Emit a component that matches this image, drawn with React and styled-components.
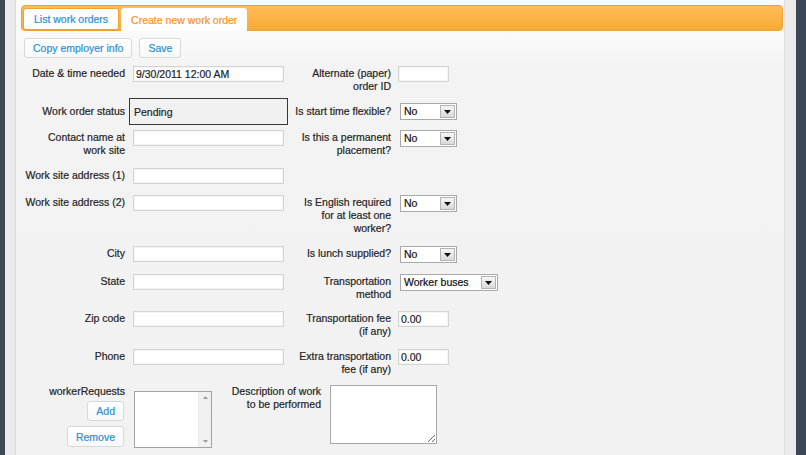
import React from 'react';
import styled, { createGlobalStyle } from 'styled-components';

const GlobalStyle = createGlobalStyle`
  html, body { margin: 0; padding: 0; height: 100%; }
  body {
    background: #3c4756;
    font-family: "Liberation Sans", Arial, sans-serif;
    font-size: 10.5px;
    color: #252525;
    overflow: hidden;
    -webkit-text-stroke: 0.2px currentColor;
  }
  #root { height: 100%; }
`;

const Shell = styled.div`
  height: 455px;
  margin: 0 10px 0 5px;
  padding: 0 11px 0 10px;
  box-sizing: border-box;
  background: #ebebeb;
`;

const Panel = styled.div`
  height: 100%;
  box-sizing: border-box;
  border-left: 1px solid #d9d9d9;
  border-right: 1px solid #e0e0e0;
  background: linear-gradient(#fbfbfb 0, #fafafa 36px, #f3f3f3 70px, #f2f2f2 100%);
  padding: 5px 1px 0 5px;
`;

const TabBar = styled.div`
  height: 26px;
  box-sizing: border-box;
  border: 1px solid #eca136;
  border-radius: 4px;
  background: linear-gradient(#ffbd55 0%, #fcb447 45%, #f9aa36 100%);
  display: flex;
  align-items: flex-end;
  gap: 2px;
  padding-left: 1px;
`;

const Tab = styled.div`
  box-sizing: border-box;
  height: ${p => (p.$active ? '23px' : '22px')};
  margin-bottom: ${p => (p.$active ? '-1px' : '0')};
  padding: 0 ${p => (p.$active ? 9 : 10)}px;
  display: flex;
  align-items: center;
  background: #fff;
  border: ${p => (p.$active ? '1px solid #fff' : '1px solid #f0a232')};
  border-radius: ${p => (p.$active ? '3px 3px 0 0' : '3px')};
  color: ${p => (p.$active ? '#f7911f' : '#2a8fd2')};
  font-size: 10.5px;
  white-space: nowrap;
`;

const Toolbar = styled.div`
  display: flex;
  gap: 7px;
  margin: 7px 0 0 3px;
`;

const Button = styled.div`
  box-sizing: border-box;
  height: ${p => p.$h || 20}px;
  padding: 0 ${p => p.$px ?? 8}px;
  display: inline-flex;
  align-items: center;
  justify-content: center;
  background: linear-gradient(#ffffff, #f8f8f8);
  border: 1px solid #d9d9d9;
  border-radius: 3px;
  color: #2a90d3;
  font-size: 10.5px;
  white-space: nowrap;
`;

const Form = styled.div`
  margin-top: 8px;
`;

const Row = styled.div`
  display: grid;
  grid-template-columns: 108px 163px 106px 1fr;
  align-items: ${p => (p.$center ? 'center' : 'start')};
  margin-bottom: ${p => p.$mb ?? 11}px;
`;

const Label = styled.div`
  text-align: right;
  padding-right: ${p => (p.$right ? 7 : 4)}px;
  padding-top: ${p => (p.$center ? 0 : 1)}px;
  line-height: 13px;
  white-space: nowrap;
`;

const Cell = styled.div`
  display: flex;
  align-items: flex-start;
`;

const TextInput = styled.input`
  box-sizing: border-box;
  width: ${p => (p.$small ? 51 : 151)}px;
  height: 16px;
  margin: 0 0 0 ${p => (p.$small ? 0 : 4)}px;
  padding: 0 2px;
  border: 1px solid #d5d5d5;
  box-shadow: inset 0 0 0 1px #f4f4f4;
  background: #fff;
  font-family: inherit;
  font-size: 10.5px;
  color: #1e1e1e;
  -webkit-text-stroke: 0.2px currentColor;
  outline: none;
`;

const StatusBox = styled.div`
  box-sizing: border-box;
  width: 159px;
  height: 27px;
  border: 1px solid #383838;
  background: #f1f1f1;
  padding-left: 4px;
  display: flex;
  align-items: center;
`;

const SelectBox = styled.div`
  box-sizing: border-box;
  width: ${p => p.$w || 57}px;
  height: 17px;
  margin-left: 2px;
  border: 1px solid #a9a9a9;
  background: #fff;
  display: flex;
  align-items: center;
  color: #111;
`;

const SelectText = styled.span`
  flex: 1;
  padding-left: 3px;
  line-height: 15px;
`;

const SelectButton = styled.span`
  box-sizing: border-box;
  width: 15px;
  height: 13px;
  margin-right: 1px;
  border: 1px solid #b3b3b3;
  background: linear-gradient(#f6f6f6, #d9d9d9);
  display: flex;
  align-items: center;
  justify-content: center;
`;

const LastRow = styled.div`
  display: flex;
  align-items: flex-start;
`;

const WorkerCol = styled.div`
  width: 104px;
  display: flex;
  flex-direction: column;
  align-items: flex-end;
`;

const WorkerLabel = styled.div`
  line-height: 13px;
`;

const WorkerButtons = styled.div`
  display: flex;
  flex-direction: column;
  align-items: flex-end;
  gap: 5px;
  margin-top: 3px;
  margin-right: 1px;
`;

const ListBox = styled.div`
  box-sizing: border-box;
  width: 78px;
  height: 57px;
  margin: 6px 0 0 9px;
  border: 1px solid #a3a3a3;
  background: #fff;
  display: flex;
  justify-content: flex-end;
`;

const ScrollBar = styled.div`
  width: 12px;
  background: #f1f1f1;
  border-left: 1px solid #e9e9e9;
  display: flex;
  flex-direction: column;
  justify-content: space-between;
  align-items: center;
  padding: 4px 0;
`;

const DescLabel = styled.div`
  width: 99px;
  margin-left: 10px;
  text-align: right;
  line-height: 13px;
  white-space: nowrap;
`;

const TextArea = styled.textarea`
  box-sizing: border-box;
  width: 107px;
  height: 59px;
  margin: 0 0 0 9px;
  border: 1px solid #a8a8a8;
  background: #fff;
  font-family: inherit;
  font-size: 10.5px;
  outline: none;
`;

const Arrow = ({ up, color = '#111', w = 7, h = 4 }) => (
  <svg width={w} height={h} viewBox="0 0 7 4">
    <polygon points={up ? '0,4 7,4 3.5,0' : '0,0 7,0 3.5,4'} fill={color} />
  </svg>
);

const Select = ({ value, w }) => (
  <SelectBox $w={w}>
    <SelectText>{value}</SelectText>
    <SelectButton>
      <Arrow />
    </SelectButton>
  </SelectBox>
);

export default function App() {
  return (
    <>
      <GlobalStyle />
      <Shell>
        <Panel>
          <TabBar>
            <Tab>List work orders</Tab>
            <Tab $active>Create new work order</Tab>
          </TabBar>
          <Toolbar>
            <Button>Copy employer info</Button>
            <Button>Save</Button>
          </Toolbar>
          <Form>
            <Row $mb={5}>
              <Label>Date &amp; time needed</Label>
              <Cell><TextInput defaultValue="9/30/2011 12:00 AM" /></Cell>
              <Label $right>Alternate (paper)<br />order ID</Label>
              <Cell><TextInput $small defaultValue="" /></Cell>
            </Row>
            <Row $mb={5} $center>
              <Label $center>Work order status</Label>
              <Cell><StatusBox>Pending</StatusBox></Cell>
              <Label $right $center>Is start time flexible?</Label>
              <Cell><Select value="No" /></Cell>
            </Row>
            <Row>
              <Label>Contact name at<br />work site</Label>
              <Cell><TextInput /></Cell>
              <Label $right>Is this a permanent<br />placement?</Label>
              <Cell><Select value="No" /></Cell>
            </Row>
            <Row>
              <Label>Work site address (1)</Label>
              <Cell><TextInput /></Cell>
              <div />
              <div />
            </Row>
            <Row>
              <Label>Work site address (2)</Label>
              <Cell><TextInput /></Cell>
              <Label $right>Is English required<br />for at least one<br />worker?</Label>
              <Cell><Select value="No" /></Cell>
            </Row>
            <Row>
              <Label>City</Label>
              <Cell><TextInput /></Cell>
              <Label $right>Is lunch supplied?</Label>
              <Cell><Select value="No" /></Cell>
            </Row>
            <Row $mb={10}>
              <Label>State</Label>
              <Cell><TextInput /></Cell>
              <Label $right>Transportation<br />method</Label>
              <Cell><Select value="Worker buses" w={98} /></Cell>
            </Row>
            <Row>
              <Label>Zip code</Label>
              <Cell><TextInput /></Cell>
              <Label $right>Transportation fee<br />(if any)</Label>
              <Cell><TextInput $small defaultValue="0.00" /></Cell>
            </Row>
            <Row $mb={9}>
              <Label>Phone</Label>
              <Cell><TextInput /></Cell>
              <Label $right>Extra transportation<br />fee (if any)</Label>
              <Cell><TextInput $small defaultValue="0.00" /></Cell>
            </Row>
            <LastRow>
              <WorkerCol>
                <WorkerLabel>workerRequests</WorkerLabel>
                <WorkerButtons>
                  <Button $px={8}>Add</Button>
                  <Button $px={8} $h={21}>Remove</Button>
                </WorkerButtons>
              </WorkerCol>
              <ListBox>
                <ScrollBar>
                  <Arrow up color="#9a9a9a" w={5} h={3} />
                  <Arrow color="#9a9a9a" w={5} h={3} />
                </ScrollBar>
              </ListBox>
              <DescLabel>Description of work<br />to be performed</DescLabel>
              <TextArea />
            </LastRow>
          </Form>
        </Panel>
      </Shell>
    </>
  );
}
